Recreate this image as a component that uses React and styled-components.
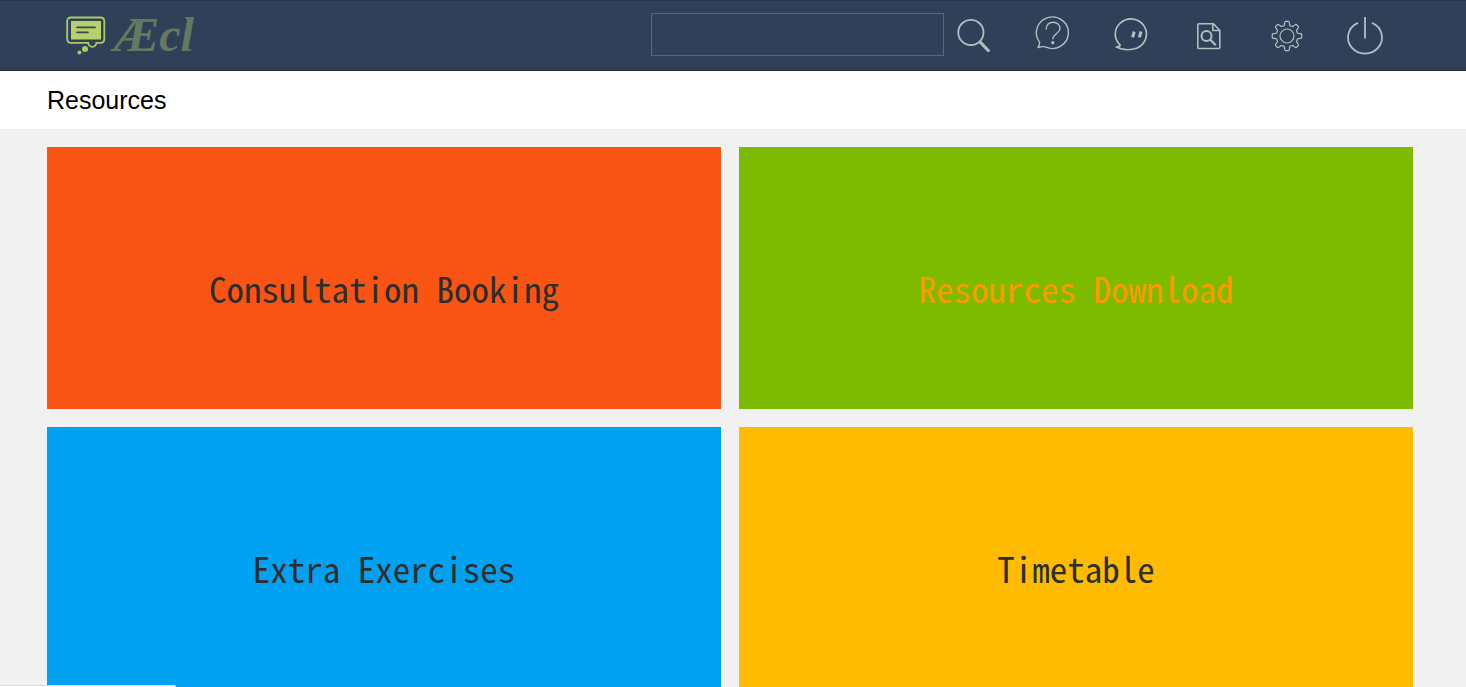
import React from "react";
import styled, { createGlobalStyle } from "styled-components";

const GlobalStyle = createGlobalStyle`
  *, *::before, *::after { box-sizing: border-box; }
  body { margin: 0; background: #f1f1f1; font-family: "Liberation Sans", Arial, sans-serif; }
`;

const Page = styled.div`
  height: 100vh;
  overflow: hidden;
`;

const Header = styled.header`
  display: flex;
  align-items: center;
  justify-content: space-between;
  height: 71px;
  padding: 0 62px 0 66px;
  background: #2f4058;
  border-bottom: 1px solid #252d3b;
  box-shadow: inset 0 1px 0 #26364f;
`;

const Logo = styled.a`
  display: flex;
  align-items: center;
  gap: 8px;
  color: #637a60;
  text-decoration: none;
`;

const LogoText = styled.span`
  font: italic bold 48px/56px "Liberation Serif", "Times New Roman", serif;
  white-space: nowrap;
`;

const Tools = styled.div`
  display: flex;
  align-items: center;
`;

const SearchForm = styled.form`
  display: flex;
  align-items: flex-start;
`;

const SearchInput = styled.input`
  width: 293px;
  height: 43px;
  margin-top: 13px;
  padding: 0 12px;
  border: 1px solid #5c686d;
  border-radius: 0;
  background: transparent;
  color: #b4c2c4;
  font: 18px "Liberation Sans", Arial, sans-serif;
  outline: none;
`;

const IconButton = styled.button`
  display: flex;
  align-items: center;
  justify-content: center;
  width: ${(p) => (p.$search ? "70px" : "78px")};
  height: 70px;
  padding: ${(p) => (p.$search ? "0 20px 0 10px" : "0")};
  border: 0;
  background: none;
  cursor: pointer;
`;

const Icon = styled.svg`
  display: block;
  flex: none;
  width: 40px;
  height: 40px;
  overflow: visible;
  fill: none;
  stroke: #b0bfc0;
  stroke-width: ${(p) => p.$weight || 1.4};
  stroke-linejoin: round;
`;

const TitleBar = styled.div`
  height: 59px;
  padding: 0 47px;
  background: #fff;
  border-bottom: 1px solid #e7e7e7;
`;

const Title = styled.h1`
  margin: 0;
  color: #000;
  font-size: 25px;
  font-weight: 400;
  line-height: 58px;
`;

const Tiles = styled.main`
  display: grid;
  grid-template-columns: 1fr 1fr;
  grid-auto-rows: 262px;
  gap: 18px;
  padding: 17px 53px 18px 47px;
`;

const Tile = styled.a`
  display: flex;
  align-items: center;
  justify-content: center;
  padding-top: 20px;
  background: ${(p) => p.$fill};
  color: ${(p) => (p.$active ? "#ff9900" : "#2e2e2e")};
  font: 35px/40px "Noto Sans Mono CJK SC", "DejaVu Sans Mono", monospace;
  text-decoration: none;
  white-space: nowrap;
`;

const StatusBubble = styled.div`
  position: fixed;
  left: 0;
  bottom: 0;
  width: 176px;
  height: 2px;
  background: #fff;
  border-top: 1px solid #d8dde0;
  border-top-right-radius: 2px;
`;

// Outline of an eight-toothed cog centred on (cx, cy).
const cogPath = (cx, cy, outer, root) => {
  const at = (r, deg) => {
    const a = (deg * Math.PI) / 180;
    return `${(cx + r * Math.sin(a)).toFixed(2)} ${(cy - r * Math.cos(a)).toFixed(2)}`;
  };
  const parts = [];
  for (let i = 0; i < 8; i += 1) {
    const d = i * 45;
    parts.push(
      `${i ? "L" : "M"}${at(root, d - 16)}`,
      `Q${at(root + 0.8, d - 12)} ${at(outer - 1.5, d - 10)}`,
      `Q${at(outer, d - 9)} ${at(outer, d - 6)}`,
      `L${at(outer, d + 6)}`,
      `Q${at(outer, d + 9)} ${at(outer - 1.5, d + 10)}`,
      `Q${at(root + 0.8, d + 12)} ${at(root, d + 16)}`
    );
  }
  return `${parts.join("")}Z`;
};

const actions = [
  {
    label: "Help",
    drawing: (
      <>
        <path d="M5 32.5C6.2 31 6.5 29 6.6 27.2A16 15.8 0 1 1 13 32.2C11 31.4 8 31.6 5 32.5Z" />
        <path d="M13.2 14.5C13 10 16 7.2 20 7.2C24 7.2 27 9.8 27 13.6C27 18.4 19.8 18.7 19.8 24.3" />
        <circle cx="19.8" cy="27.7" r="0.9" fill="#b0bfc0" />
      </>
    ),
  },
  {
    label: "Messages",
    weight: 1.7,
    drawing: (
      <>
        <path d="M9.2 30.2A15.6 15.2 0 1 1 26.2 33C19.2 35.6 11.2 34.8 5.2 32C7.2 32 8.7 31.4 9.2 30.2Z" />
        <path d="M23.2 16.5L21.6 22.3M30 16.5L28.4 22.3" strokeWidth="3" />
      </>
    ),
  },
  {
    label: "Search documents",
    weight: 1.6,
    drawing: (
      <>
        <path d="M9.5 8.8H24.5L30.8 15.5V32.5Q30.8 33.5 29.8 33.5H9.8Q8.8 33.5 8.8 32.5V9.8Q8.8 8.8 9.8 8.8M23.8 8.8V15.5H30.8" />
        <circle cx="17.5" cy="21" r="5" strokeWidth="2" />
        <path d="M21 24.5L26.8 30.3" strokeWidth="2.2" />
      </>
    ),
  },
  {
    label: "Settings",
    weight: 1.2,
    drawing: (
      <>
        <path d={cogPath(20, 21, 14.8, 10.8)} />
        <circle cx="20" cy="21" r="7" />
      </>
    ),
  },
  {
    label: "Log out",
    weight: 1.8,
    drawing: <path d="M13 7.8A17 16.1 0 1 0 27 7.8M20 2V23.5" />,
  },
];

const tiles = [
  { label: "Consultation Booking", fill: "#f95414" },
  { label: "Resources Download", fill: "#7cbb00", active: true },
  { label: "Extra Exercises", fill: "#00a1f1" },
  { label: "Timetable", fill: "#ffbb00" },
];

const LogoMark = () => (
  <svg width="40" height="40" viewBox="0 0 40 40" fill="none" aria-hidden="true">
    <path
      d="M5 2.5H34.5Q38.3 2.5 38.3 6.3V24Q38.3 27.8 34.5 27.8H30.3A4 4 0 0 1 22.3 27.8H5Q1.2 27.8 1.2 24V6.3Q1.2 2.5 5 2.5Z"
      stroke="#a9cc62"
      strokeWidth="1.8"
    />
    <path d="M5 6H35V24.5H5Z" fill="#b7d168" />
    <path d="M11 12.3H29M11 17.3H22" stroke="#344a55" strokeWidth="1.8" strokeLinecap="round" />
    <circle cx="19" cy="34" r="3" fill="#a9cc62" />
    <circle cx="13.4" cy="37.5" r="2" fill="#a9cc62" />
  </svg>
);

export default function App() {
  return (
    <Page>
      <GlobalStyle />
      <Header>
        <Logo href="#">
          <LogoMark />
          <LogoText>Æcl</LogoText>
        </Logo>
        <Tools>
          <SearchForm role="search" onSubmit={(e) => e.preventDefault()}>
            <SearchInput type="text" aria-label="Search" />
            <IconButton type="submit" aria-label="Search" $search>
              <Icon viewBox="0 0 40 40" $weight={1.8}>
                <circle cx="16.9" cy="17.4" r="12.6" />
                <path d="M25.5 26.4L35.2 36.5" strokeWidth="3" />
              </Icon>
            </IconButton>
          </SearchForm>
          {actions.map((a) => (
            <IconButton key={a.label} type="button" aria-label={a.label}>
              <Icon viewBox="0 0 40 40" $weight={a.weight}>
                {a.drawing}
              </Icon>
            </IconButton>
          ))}
        </Tools>
      </Header>
      <TitleBar>
        <Title>Resources</Title>
      </TitleBar>
      <Tiles>
        {tiles.map((t) => (
          <Tile key={t.label} href="#" $fill={t.fill} $active={t.active}>
            {t.label}
          </Tile>
        ))}
      </Tiles>
      <StatusBubble />
    </Page>
  );
}
